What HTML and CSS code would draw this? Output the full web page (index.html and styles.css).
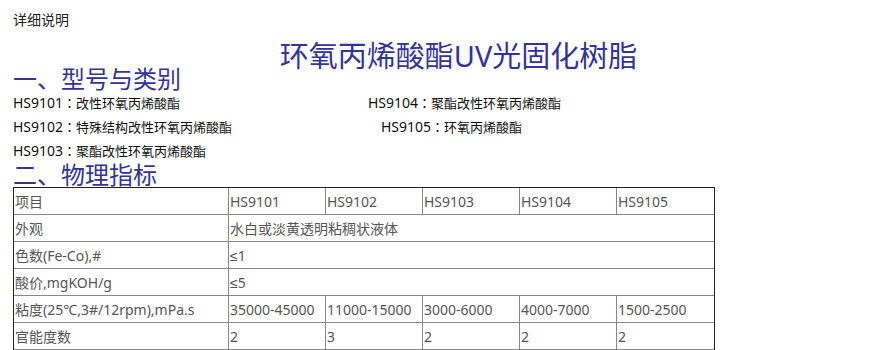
FILE: index.html
```html
<!DOCTYPE html>
<html lang="zh-CN">
<head>
<meta charset="utf-8">
<title>详细说明</title>
<link rel="stylesheet" href="styles.css">
</head>
<body>
<div class="page">
  <div class="label">详细说明</div>
  <h1 class="title">环氧丙烯酸酯UV光固化树脂</h1>
  <h2 class="section">一、型号与类别</h2>
  <div class="models">
    <div class="model-row">
      <span class="model first"><span class="code">HS9101</span><span class="colon" lang="zh-TW">：</span>改性环氧丙烯酸酯</span>
      <span class="model"><span class="code">HS9104</span><span class="colon" lang="zh-TW">：</span>聚酯改性环氧丙烯酸酯</span>
    </div>
    <div class="model-row">
      <span class="model first wide"><span class="code">HS9102</span><span class="colon" lang="zh-TW">：</span>特殊结构改性环氧丙烯酸酯</span>
      <span class="model"><span class="code">HS9105</span><span class="colon" lang="zh-TW">：</span>环氧丙烯酸酯</span>
    </div>
    <div class="model-row">
      <span class="model first"><span class="code">HS9103</span><span class="colon" lang="zh-TW">：</span>聚酯改性环氧丙烯酸酯</span>
    </div>
  </div>
  <h2 class="section">二、物理指标</h2>
  <table class="spec">
    <colgroup>
      <col class="c-name">
      <col class="c-val">
      <col class="c-val">
      <col class="c-val">
      <col class="c-val">
      <col class="c-val">
    </colgroup>
    <tr><td>项目</td><td>HS9101</td><td>HS9102</td><td>HS9103</td><td>HS9104</td><td>HS9105</td></tr>
    <tr><td>外观</td><td colspan="5">水白或淡黄透明粘稠状液体</td></tr>
    <tr><td>色数(Fe-Co),#</td><td colspan="5"><span class="sym">≤</span>1</td></tr>
    <tr><td>酸价,mgKOH/g</td><td colspan="5"><span class="sym">≤</span>5</td></tr>
    <tr><td>粘度(25℃,3#/12rpm),mPa.s</td><td>35000-45000</td><td>11000-15000</td><td>3000-6000</td><td>4000-7000</td><td>1500-2500</td></tr>
    <tr><td>官能度数</td><td>2</td><td>3</td><td>2</td><td>2</td><td>2</td></tr>
  </table>
</div>
</body>
</html>
```

FILE: styles.css
```css
html, body {
  margin: 0;
  padding: 0;
  background: #ffffff;
}

body {
  padding: 8px;
  font-family: "Noto Sans", "Noto Sans CJK SC", sans-serif;
  color: #222222;
  overflow: hidden;
}

.page {
  padding: 0 5px;
}

.label {
  font-size: 14px;
  line-height: 24px;
  color: #222222;
}

.title {
  margin: 13px 0 0;
  padding-left: 36px;
  text-align: center;
  font-size: 29px;
  font-weight: normal;
  line-height: 22px;
  color: #333399;
}

.section {
  margin: 0;
  font-size: 24px;
  font-weight: normal;
  line-height: 24px;
  color: #333399;
}

.models {
  font-size: 13px;
  line-height: 24px;
  color: #111111;
}

.model-row {
  display: flex;
}

.model.first {
  width: 355px;
}

.model.first.wide {
  width: 368px;
}

.code {
  font-size: 14px;
}

.colon {
  font-family: "Noto Sans CJK TC", "Noto Sans CJK JP", sans-serif;
}

.sym {
  font-family: "Liberation Sans", "DejaVu Sans", sans-serif;
}

.spec {
  border-collapse: separate;
  border-spacing: 0;
  table-layout: fixed;
  width: 702px;
  border: 1px solid #222222;
  font-size: 14px;
  color: #555555;
}

.c-name {
  width: 215px;
}

.c-val {
  width: 97px;
}

.spec td {
  box-sizing: border-box;
  height: 27px;
  padding: 0 1px;
  border-right: 1px solid #888888;
  border-bottom: 1px solid #888888;
  white-space: nowrap;
  overflow: hidden;
  vertical-align: middle;
}

.spec td:last-child {
  border-right: none;
}
```
